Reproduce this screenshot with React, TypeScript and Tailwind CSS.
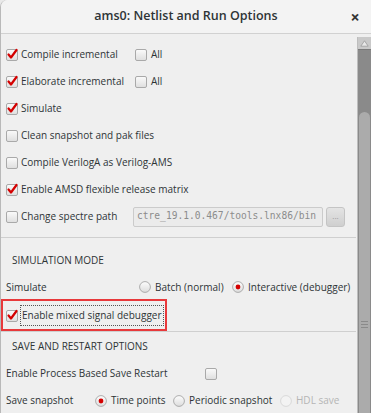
import React from "react";

const font = { fontFamily: '"Open Sans", "Noto Sans", sans-serif' };

function Check({ checked }: { checked?: boolean }) {
  return (
    <svg width="13" height="13" viewBox="0 0 13 13" className="shrink-0">
      <defs>
        <linearGradient id="cbg" x1="0" y1="0" x2="0" y2="1">
          <stop offset="0" stopColor="#fbfbfb" />
          <stop offset="1" stopColor="#dedede" />
        </linearGradient>
      </defs>
      <rect x="0.5" y="1.5" width="11" height="11" rx="1.5" fill="url(#cbg)" stroke="#a9a9a9" />
      {checked && (
        <path d="M2.5 6.5 L5 9.5 L10.5 2" fill="none" stroke="#d40000" strokeWidth="2.2" strokeLinecap="round" strokeLinejoin="round" />
      )}
    </svg>
  );
}

function Radio({ on, disabled }: { on?: boolean; disabled?: boolean }) {
  return (
    <svg width="12" height="12" viewBox="0 0 12 12" className="shrink-0">
      <defs>
        <linearGradient id="rbg" x1="0" y1="0" x2="0" y2="1">
          <stop offset="0" stopColor="#fdfdfd" />
          <stop offset="1" stopColor="#dcdcdc" />
        </linearGradient>
      </defs>
      <circle cx="6" cy="6" r="5.4" fill={disabled ? "#f3f3f3" : "url(#rbg)"} stroke={disabled ? "#d6d6d6" : "#a5a5a5"} strokeWidth="0.9" />
      {on && <circle cx="6" cy="6" r="2.4" fill="#d40000" />}
    </svg>
  );
}

function CheckRow({ label, checked, all }: { label: string; checked?: boolean; all?: boolean }) {
  return (
    <div className="h-[27px] flex items-center pl-[5px]">
      <div className="w-[129px] flex items-center">
        <Check checked={checked} />
        <span className="ml-[2px] whitespace-nowrap">{label}</span>
      </div>
      {all && (
        <div className="flex items-center">
          <Check />
          <span className="ml-[3px]">All</span>
        </div>
      )}
    </div>
  );
}

export default function App() {
  return (
    <div className="w-[371px] h-[413px] bg-[#e9e9e9] overflow-hidden text-[10px] text-[#2e3436]" style={font}>
      <div className="h-full flex flex-col bg-[#efefef] rounded-tl-[7px] border-l border-[#b9b9b9]">
        {/* title bar */}
        <div className="h-[34px] shrink-0 flex items-center bg-[#f3f3f3] border-b border-[#d1d1d1] rounded-tl-[7px]">
          <div className="w-[40px]" />
          <div className="flex-1 text-center text-[12.5px] font-semibold text-[#2e3436]">ams0: Netlist and Run Options</div>
          <div className="w-[40px] flex justify-center pl-[8px] text-[16px] font-bold text-[#333]">×</div>
        </div>

        <div className="flex-1 flex">
          <div className="flex-1 flex flex-col pt-[7px] pr-[1px]">
            <CheckRow label="Compile incremental" checked all />
            <CheckRow label="Elaborate incremental" checked all />
            <CheckRow label="Simulate" checked />
            <CheckRow label="Clean snapshot and pak files" />
            <CheckRow label="Compile VerilogA as Verilog-AMS" />
            <CheckRow label="Enable AMSD flexible release matrix" checked />
            <div className="h-[27px] flex items-center pl-[5px]">
              <div className="w-[127px] flex items-center">
                <Check />
                <span className="ml-[2px] whitespace-nowrap">Change spectre path</span>
              </div>
              <div className="w-[190px] h-[20px] flex items-center px-[3px] bg-[#ebebeb] border border-[#cbcbcb] rounded-[2px] text-[9.6px] text-[#8c8c8c] overflow-hidden whitespace-nowrap" style={{ fontFamily: '"DejaVu Sans Mono", monospace' }}>
                ctre_19.1.0.467/tools.lnx86/bin
              </div>
              <div className="ml-[3px] w-[19px] h-[20px] rounded-[3px] border border-[#c4c4c4] bg-gradient-to-b from-[#e4e4e4] to-[#cfcfcf] flex items-center justify-center text-[8px] text-[#999] leading-none pb-[2px]">
                ...
              </div>
            </div>

            <div className="mt-[7px] h-px bg-[#cfcfcf]" />

            <div className="h-[37px] pt-[14px] pl-[11px] leading-[16px]">SIMULATION MODE</div>
            <div className="h-[24px] flex items-center pl-[5px]">
              <span className="w-[133px]">Simulate</span>
              <Radio />
              <span className="ml-[4px] w-[77px] whitespace-nowrap">Batch (normal)</span>
              <Radio on />
              <span className="ml-[4px] whitespace-nowrap">Interactive (debugger)</span>
            </div>
            <div className="h-[32px] w-[166px] border-2 border-[#e8393b] flex items-center pl-[3px]">
              <Check checked />
              <span className="ml-[1px] px-[1px] py-[2px] border border-dotted border-[#555] whitespace-nowrap">Enable mixed signal debugger</span>
            </div>

            <div className="h-px bg-[#cfcfcf]" />

            <div className="h-[28px] pt-[6px] pl-[11px] leading-[16px]">SAVE AND RESTART OPTIONS</div>
            <div className="h-[27px] flex items-center pl-[5px]">
              <span className="w-[199px] whitespace-nowrap">Enable Process Based Save Restart</span>
              <Check />
            </div>
            <div className="h-[27px] flex items-center pl-[5px]">
              <span className="w-[89px]">Save snapshot</span>
              <Radio on />
              <span className="ml-[4px] w-[62px] whitespace-nowrap">Time points</span>
              <Radio />
              <span className="ml-[4px] w-[91px] whitespace-nowrap">Periodic snapshot</span>
              <Radio disabled />
              <span className="ml-[4px] text-[#b5b5b5]">HDL save</span>
            </div>
          </div>

          {/* scrollbar */}
          <div className="w-[14px] mt-[3px] flex flex-col bg-[#8a8a8a] border-l border-[#bdbdbd]">
            <div className="h-[13px] bg-[#c9c9c9] border-b border-[#7a7a7a] flex items-center justify-center">
              <svg width="9" height="7" viewBox="0 0 9 7">
                <path d="M4.5 0.8 L8.2 6.2 L0.8 6.2 Z" fill="#e8e8e8" stroke="#9a9a9a" strokeWidth="0.8" />
              </svg>
            </div>
            <div className="h-[62px]" />
            <div className="flex-1 mx-[1px] rounded-t-[6px] bg-[#ababab] flex flex-col items-center pt-[209px]">
              <div className="w-[7px] h-px bg-[#8a8a8a]" />
              <div className="w-[7px] h-px bg-[#8a8a8a] mt-[2px]" />
              <div className="w-[7px] h-px bg-[#8a8a8a] mt-[2px]" />
            </div>
          </div>
        </div>
      </div>
    </div>
  );
}
